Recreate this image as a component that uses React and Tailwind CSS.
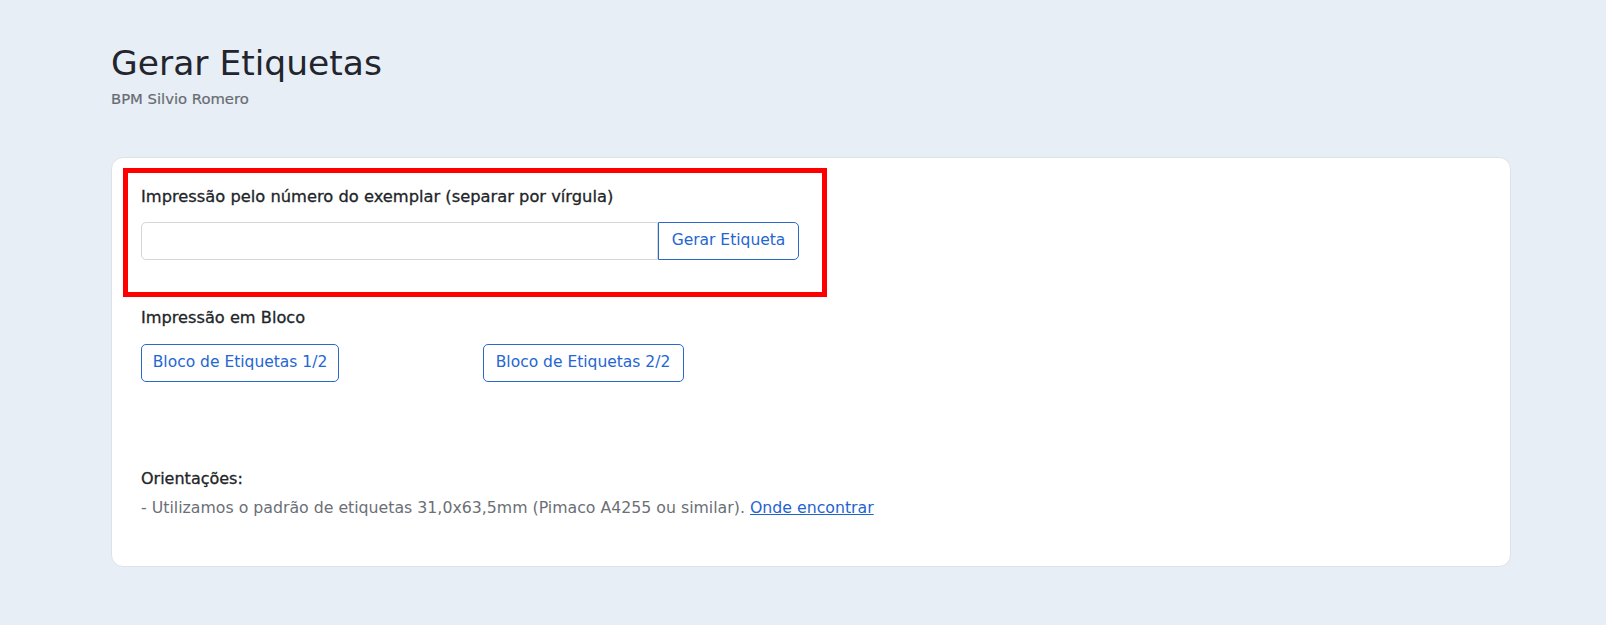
import React, { useState } from "react";

function App() {
  const [numeros, setNumeros] = useState("");

  return (
    <div className="min-h-screen bg-[#e8eef6] font-['DejaVu_Sans',sans-serif]">
      <div className="ml-[111px] w-[1400px] pt-[43px] pb-[50px]">
        {/* Header */}
        <h1 className="text-[34.5px] leading-[40px] font-normal text-[#22252d]">
          Gerar Etiquetas
        </h1>
        <p className="mt-[6px] text-[14.8px] leading-[20px] text-[#676b72] [-webkit-text-stroke:0.2px_#676b72]">
          BPM Silvio Romero
        </p>

        {/* Card */}
        <div className="mt-[48px] bg-white border border-[#dde2e8] rounded-[12px] pt-[10px] pl-[11px] pb-[46px]">
          {/* Impressão por número */}
          <div className="w-[704px] border-[5px] border-[#ff0000] pl-[13px] pr-[23px] pt-[12px] pb-[32px]">
            <label className="block text-[16.3px] leading-6 font-medium text-[#212529] [-webkit-text-stroke:0.3px_#212529]">
              Impressão pelo número do exemplar (separar por vírgula)
            </label>
            <div className="mt-[13px] flex h-[38px]">
              <input
                type="text"
                value={numeros}
                onChange={(e) => setNumeros(e.target.value)}
                className="flex-1 min-w-0 border border-[#d3d7dc] rounded-l-[5px] px-3 outline-none text-[15px]"
              />
              <button className="w-[141px] shrink-0 border border-[#2a68c9] rounded-r-[5px] text-[15.5px] text-[#2466d2] bg-white">
                Gerar Etiqueta
              </button>
            </div>
          </div>

          <div className="pl-[18px]">
            {/* Impressão em bloco */}
            <h2 className="mt-[9px] text-[16.2px] leading-6 font-medium text-[#212529] [-webkit-text-stroke:0.3px_#212529]">
              Impressão em Bloco
            </h2>
            <div className="mt-[14px] flex">
              <div className="w-[341.5px]">
                <button className="w-[198px] h-[38px] border border-[#2a68c9] rounded-[5px] text-[15.5px] text-[#2466d2] bg-white">
                  Bloco de Etiquetas 1/2
                </button>
              </div>
              <div>
                <button className="w-[201px] h-[38px] border border-[#2a68c9] rounded-[5px] text-[15.5px] text-[#2466d2] bg-white">
                  Bloco de Etiquetas 2/2
                </button>
              </div>
            </div>

            {/* Orientações */}
            <p className="mt-[85px] text-[16px] leading-6 font-medium text-[#212529] [-webkit-text-stroke:0.3px_#212529]">
              Orientações:
            </p>
            <p className="mt-[5px] text-[15.75px] leading-6 text-[#6b6f76]">
              - Utilizamos o padrão de etiquetas 31,0x63,5mm (Pimaco A4255 ou similar).{" "}
              <a href="#" className="text-[#1f64d0] underline">
                Onde encontrar
              </a>
            </p>
          </div>
        </div>
      </div>
    </div>
  );
}

export default App;
